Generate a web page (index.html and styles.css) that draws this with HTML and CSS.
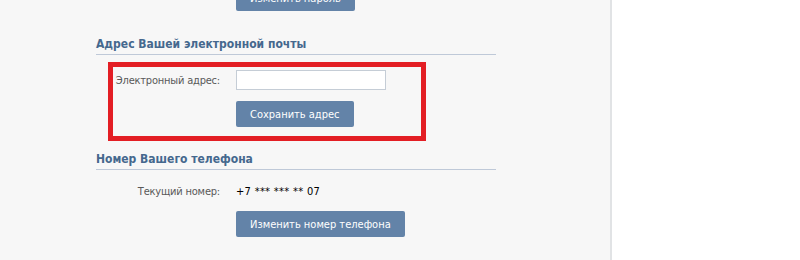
FILE: index.html
```html
<!DOCTYPE html>
<html lang="ru">
<head>
  <meta charset="UTF-8" />
  <title>Настройки</title>
  <link rel="stylesheet" href="styles.css">
</head>
<body>
<div class="page">
  <div class="settings">
    <div class="row top-row">
      <div class="label"></div>
      <button class="btn">Изменить пароль</button>
    </div>

    <h2 class="section-title">Адрес Вашей электронной почты</h2>
    <div class="highlight">
      <div class="row">
        <div class="label">Электронный адрес:</div>
        <input type="text" class="field" />
      </div>
      <div class="row btn-row">
        <div class="label"></div>
        <button class="btn">Сохранить адрес</button>
      </div>
    </div>

    <h2 class="section-title phone-title">Номер Вашего телефона</h2>
    <div class="row info-row">
      <div class="label">Текущий номер:</div>
      <div class="value">+7 *** *** ** 07</div>
    </div>
    <div class="row btn-row">
      <div class="label"></div>
      <button class="btn">Изменить номер телефона</button>
    </div>
  </div>
</div>
</body>
</html>
```

FILE: styles.css
```css
body {
  margin: 0;
  background: #fff;
  font-family: "DejaVu Sans Condensed", "DejaVu Sans", sans-serif;
  font-size: 11px;
  overflow: hidden;
}
.page {
  width: 610px;
  height: 260px;
  background: #f7f7f7;
  border-right: 2px solid #e1e3e5;
  overflow: hidden;
}
.settings {
  padding-left: 96px;
  width: 400px;
}
.row {
  display: flex;
  align-items: center;
  gap: 16px;
}
.label {
  width: 124px;
  flex-shrink: 0;
  text-align: right;
  white-space: nowrap;
  letter-spacing: -0.2px;
  color: #595959;
}
.top-row {
  margin-top: -15px;
}
.btn {
  font-family: inherit;
  font-size: 11px;
  color: #fff;
  background: #6383a8;
  border: none;
  border-radius: 2px;
  height: 26px;
  padding: 0 14px;
  cursor: pointer;
}
.section-title {
  margin: 25px 0 0;
  font-size: 12px;
  font-weight: bold;
  line-height: 16px;
  color: #45688e;
  padding-bottom: 2px;
  border-bottom: 1px solid #bfc9d8;
}
.highlight {
  margin: 7px 0 0 12px;
  width: 308px;
  border: 5px solid #e31e24;
  padding: 3px 0 9px;
}
.highlight .label {
  width: 107px;
}
.field {
  box-sizing: border-box;
  width: 150px;
  height: 20px;
  margin: 0;
  border: 1px solid #c5cdd6;
  background: #fff;
  font-family: inherit;
  font-size: 11px;
}
.btn-row {
  margin-top: 11px;
}
.phone-title {
  margin-top: 10px;
}
.info-row {
  margin-top: 14px;
  line-height: 16px;
}
.value {
  color: #000;
  letter-spacing: 0.3px;
}
```
